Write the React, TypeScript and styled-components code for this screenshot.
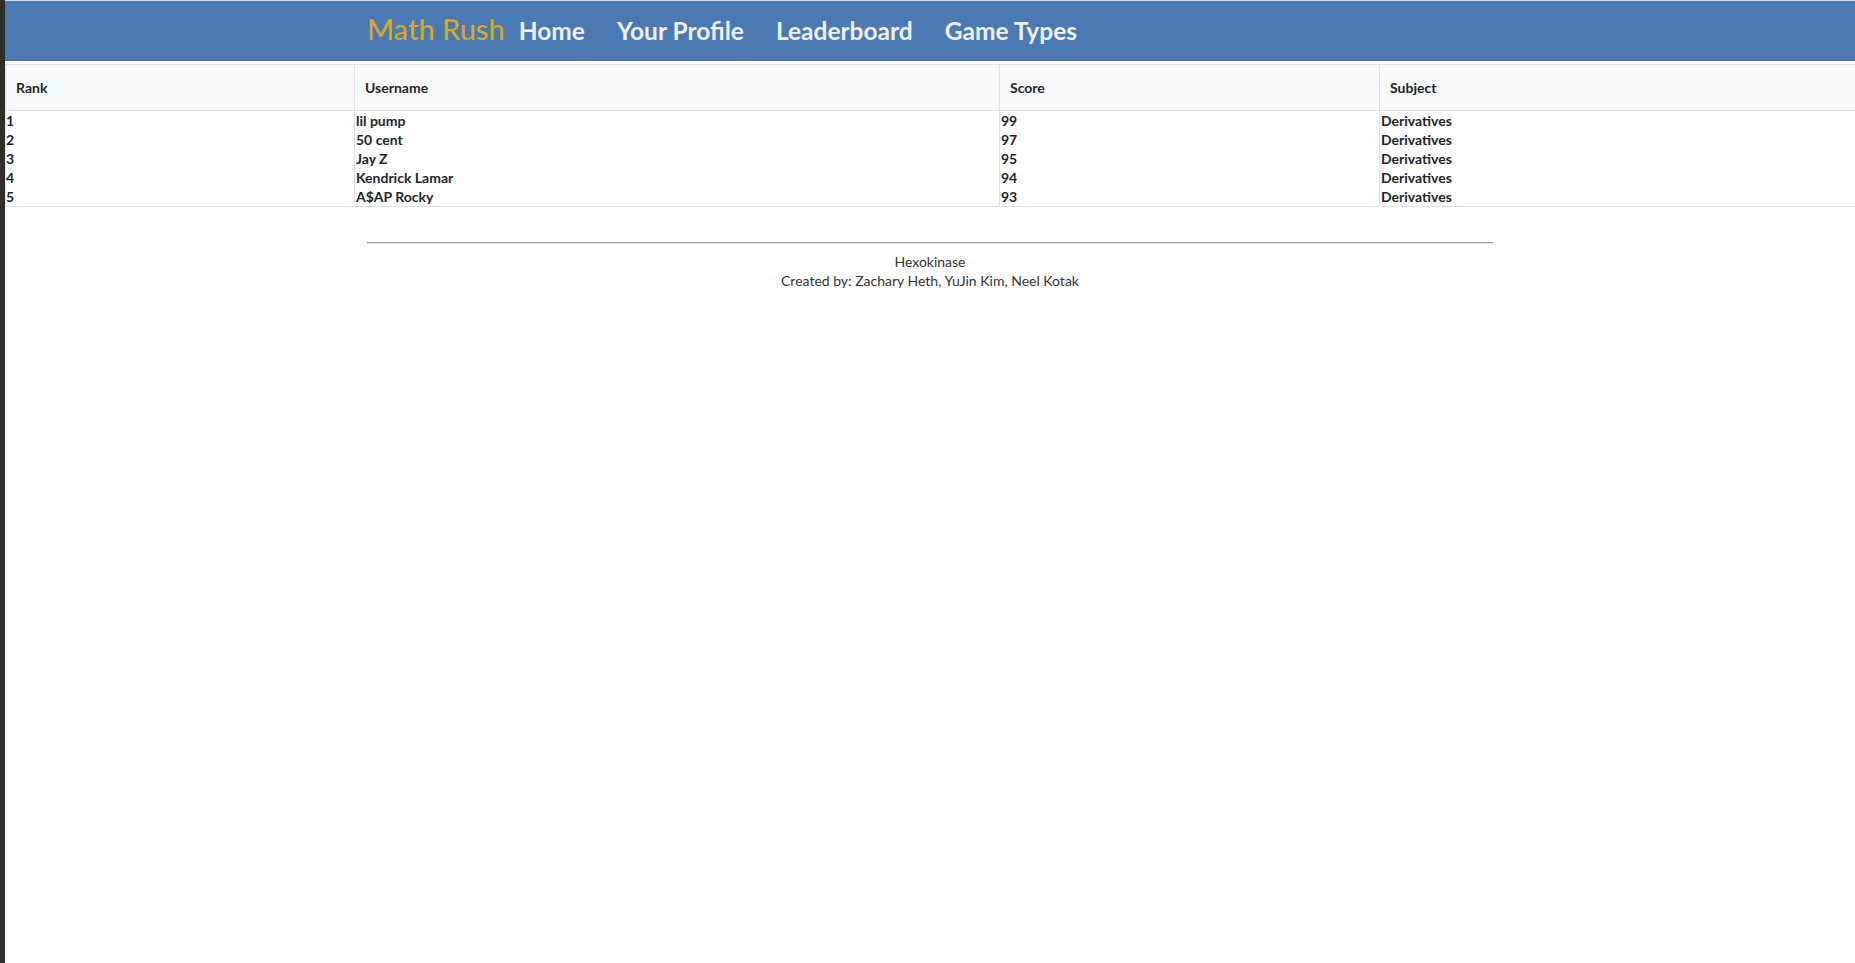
import React from "react";
import styled, { createGlobalStyle } from "styled-components";

const GlobalStyle = createGlobalStyle`
  html, body {
    margin: 0;
    padding: 0;
    background: #ffffff;
  }
  body {
    font-family: Lato, "Open Sans", "Liberation Sans", sans-serif;
    color: #212529;
  }
`;

const Page = styled.div`
  display: flex;
  min-height: 100vh;
`;

const EdgeStrip = styled.div`
  width: 5px;
  flex: 0 0 5px;
  background: #2f2e2a;
`;

const Main = styled.div`
  flex: 1;
  min-width: 0;
  border-top: 1px solid #d9dde3;
`;

const NavBar = styled.nav`
  background: #4a79b4;
  height: 60px;
  margin-bottom: 3px;
`;

const NavInner = styled.div`
  width: 1126px;
  margin: 0 auto;
  height: 100%;
  display: flex;
  align-items: baseline;
  padding-top: 11px;
  box-sizing: border-box;
`;

const Brand = styled.a`
  color: #d6a82a;
  font-size: 29px;
  font-weight: 500;
  text-decoration: none;
  margin-right: 14px;
  line-height: 1.2;
`;

const NavLinks = styled.div`
  display: flex;
  align-items: baseline;
  gap: 32px;
`;

const NavLink = styled.a`
  color: #eef2f8;
  font-size: 24.5px;
  font-weight: 700;
  text-decoration: none;
  line-height: 1.2;
`;

const Table = styled.table`
  width: 100%;
  border-collapse: collapse;
  table-layout: fixed;
  font-size: 14px;
  border-left: 1px solid #dee2e6;
  border-bottom: 1px solid #dee2e6;
`;

const HeadCell = styled.th`
  background: #f8f9fa;
  text-align: left;
  font-weight: 700;
  color: #212529;
  padding: 14px 10px;
  line-height: 17px;
  border: 1px solid #dee2e6;
  &:last-child {
    border-right: none;
  }
`;

const Cell = styled.td`
  padding: 1px;
  font-weight: 700;
  color: #212529;
  line-height: 17px;
  border-left: 1px solid #dee2e6;
  &:first-child {
    padding-left: 0;
  }
`;

const Footer = styled.footer`
  width: 1126px;
  margin: 35px auto 0;
  text-align: center;
  font-size: 14px;
  color: #333333;
`;

const Rule = styled.hr`
  border: none;
  border-top: 1px solid #9b9b9b;
  border-bottom: 1px solid #e6e6e6;
  margin: 0 0 8px;
`;

const FooterLine = styled.div`
  line-height: 19px;
`;

const rows = [
  { rank: 1, user: "lil pump", score: 99, subject: "Derivatives" },
  { rank: 2, user: "50 cent", score: 97, subject: "Derivatives" },
  { rank: 3, user: "Jay Z", score: 95, subject: "Derivatives" },
  { rank: 4, user: "Kendrick Lamar", score: 94, subject: "Derivatives" },
  { rank: 5, user: "A$AP Rocky", score: 93, subject: "Derivatives" },
];

export default function App() {
  return (
    <>
      <GlobalStyle />
      <Page>
        <EdgeStrip />
        <Main>
          <NavBar>
            <NavInner>
              <Brand href="#">Math Rush</Brand>
              <NavLinks>
                <NavLink href="#">Home</NavLink>
                <NavLink href="#">Your Profile</NavLink>
                <NavLink href="#">Leaderboard</NavLink>
                <NavLink href="#">Game Types</NavLink>
              </NavLinks>
            </NavInner>
          </NavBar>
          <Table>
            <colgroup>
              <col style={{ width: 349 }} />
              <col style={{ width: 645 }} />
              <col style={{ width: 380 }} />
              <col />
            </colgroup>
            <thead>
              <tr>
                <HeadCell>Rank</HeadCell>
                <HeadCell>Username</HeadCell>
                <HeadCell>Score</HeadCell>
                <HeadCell>Subject</HeadCell>
              </tr>
            </thead>
            <tbody>
              {rows.map((r) => (
                <tr key={r.rank}>
                  <Cell>{r.rank}</Cell>
                  <Cell>{r.user}</Cell>
                  <Cell>{r.score}</Cell>
                  <Cell>{r.subject}</Cell>
                </tr>
              ))}
            </tbody>
          </Table>
          <Footer>
            <Rule />
            <FooterLine>Hexokinase</FooterLine>
            <FooterLine>Created by: Zachary Heth, YuJin Kim, Neel Kotak</FooterLine>
          </Footer>
        </Main>
      </Page>
    </>
  );
}
